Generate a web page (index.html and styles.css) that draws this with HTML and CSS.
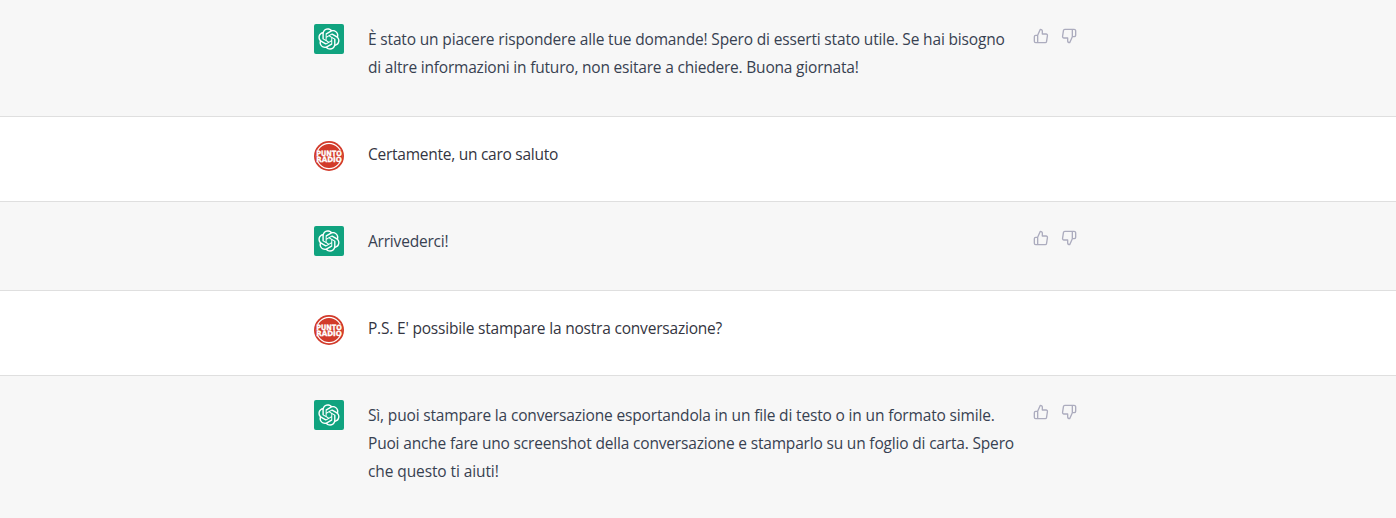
FILE: index.html
```html
<!DOCTYPE html>
<html lang="it">
<head>
    <meta charset="UTF-8">
    <meta name="viewport" content="width=device-width, initial-scale=1.0">
    <title>Chat</title>
    <link rel="stylesheet" href="styles.css">
</head>
<body>

<!-- shared icons -->
<svg class="sprite" xmlns="http://www.w3.org/2000/svg">
    <symbol id="logo" viewBox="0 0 41 41">
        <path fill="currentColor" d="M37.5324 16.8707C37.9808 15.5241 38.1363 14.0974 37.9886 12.6859C37.8409 11.2744 37.3934 9.91076 36.676 8.68622C35.6126 6.83404 33.9882 5.3676 32.0373 4.4985C30.0864 3.62941 27.9098 3.40259 25.8215 3.85078C24.8796 2.7893 23.7219 1.94125 22.4257 1.36341C21.1295 0.785575 19.7249 0.491269 18.3058 0.500197C16.1708 0.495044 14.0893 1.16803 12.3614 2.42214C10.6335 3.67624 9.34853 5.44666 8.6917 7.47815C7.30085 7.76286 5.98686 8.3414 4.8377 9.17505C3.68854 10.0087 2.73073 11.0782 2.02839 12.312C0.956464 14.1591 0.498905 16.2988 0.721698 18.4228C0.944492 20.5467 1.83612 22.5449 3.268 24.1293C2.81966 25.4759 2.66413 26.9026 2.81182 28.3141C2.95951 29.7256 3.40701 31.0892 4.12437 32.3138C5.18791 34.1659 6.8123 35.6322 8.76321 36.5013C10.7141 37.3704 12.8907 37.5973 14.9789 37.1492C15.9208 38.2107 17.0786 39.0587 18.3747 39.6366C19.6709 40.2144 21.0755 40.5087 22.4946 40.4998C24.6307 40.5054 26.7133 39.8321 28.4418 38.5772C30.1704 37.3223 31.4556 35.5506 32.1119 33.5179C33.5027 33.2332 34.8167 32.6547 35.9659 31.821C37.115 30.9874 38.0728 29.9178 38.7752 28.684C39.8458 26.8371 40.3023 24.6979 40.0789 22.5748C39.8556 20.4517 38.9639 18.4544 37.5324 16.8707ZM22.4978 37.8849C20.7443 37.8874 19.0459 37.2733 17.6994 36.1501C17.7601 36.117 17.8666 36.0586 17.936 36.0161L25.9004 31.4156C26.1003 31.3019 26.2663 31.137 26.3813 30.9378C26.4964 30.7386 26.5563 30.5124 26.5549 30.2825V19.0542L29.9213 20.998C29.9389 21.0068 29.9541 21.0198 29.9656 21.0359C29.977 21.052 29.9842 21.0707 29.9867 21.0902V30.3889C29.9842 32.375 29.1946 34.2791 27.7909 35.6841C26.3872 37.0892 24.4838 37.8806 22.4978 37.8849ZM6.39227 31.0064C5.51397 29.4888 5.19742 27.7107 5.49804 25.9832C5.55718 26.0187 5.66048 26.0818 5.73461 26.1244L13.699 30.7248C13.8975 30.8408 14.1233 30.902 14.3532 30.902C14.583 30.902 14.8088 30.8408 15.0073 30.7248L24.731 25.1103V28.9979C24.7321 29.0177 24.7283 29.0376 24.7199 29.0556C24.7115 29.0736 24.6988 29.0893 24.6829 29.1012L16.6317 33.7497C14.9096 34.7416 12.8643 35.0097 10.9447 34.4954C9.02506 33.9811 7.38785 32.7263 6.39227 31.0064ZM4.29707 13.6194C5.17156 12.0998 6.55279 10.9364 8.19885 10.3327C8.19885 10.4013 8.19491 10.5228 8.19491 10.6071V19.808C8.19351 20.0378 8.25334 20.2638 8.36823 20.4629C8.48312 20.6619 8.64893 20.8267 8.84863 20.9404L18.5723 26.5542L15.206 28.4979C15.1894 28.5089 15.1703 28.5155 15.1505 28.5173C15.1307 28.5191 15.1107 28.516 15.0924 28.5082L7.04046 23.8557C5.32135 22.8601 4.06716 21.2235 3.55289 19.3046C3.03862 17.3858 3.30624 15.3413 4.29707 13.6194ZM31.955 20.0556L22.2312 14.4411L25.5976 12.4981C25.6142 12.4872 25.6333 12.4805 25.6531 12.4787C25.6729 12.4769 25.6928 12.4801 25.7111 12.4879L33.7631 17.1364C34.9967 17.849 36.0017 18.8982 36.6606 20.1613C37.3194 21.4244 37.6047 22.849 37.4832 24.2684C37.3617 25.6878 36.8382 27.0432 35.9743 28.1759C35.1103 29.3086 33.9415 30.1717 32.6047 30.6641C32.6047 30.5947 32.6047 30.4733 32.6047 30.3889V21.188C32.6066 20.9586 32.5474 20.7328 32.4332 20.5338C32.319 20.3348 32.154 20.1698 31.955 20.0556ZM35.3055 15.0128C35.2464 14.9765 35.1431 14.9142 35.069 14.8717L27.1045 10.2712C26.906 10.1554 26.6803 10.0943 26.4504 10.0943C26.2206 10.0943 25.9948 10.1554 25.7963 10.2712L16.0726 15.8858V11.9982C16.0715 11.9783 16.0753 11.9585 16.0837 11.9405C16.0921 11.9225 16.1048 11.9068 16.1207 11.8949L24.1719 7.25025C25.4053 6.53903 26.8158 6.19376 28.2383 6.25482C29.6608 6.31589 31.0364 6.78077 32.2044 7.59508C33.3723 8.40939 34.2842 9.53945 34.8334 10.8531C35.3826 12.1667 35.5464 13.6095 35.3055 15.0128ZM14.2424 21.9419L10.8752 19.9981C10.8576 19.9893 10.8423 19.9763 10.8309 19.9602C10.8195 19.9441 10.8122 19.9254 10.8098 19.9058V10.6071C10.8107 9.18295 11.2173 7.78848 11.9819 6.58696C12.7466 5.38544 13.8377 4.42659 15.1275 3.82264C16.4173 3.21869 17.8524 2.99464 19.2649 3.1767C20.6775 3.35876 22.0089 3.93941 23.1034 4.85067C23.0427 4.88379 22.937 4.94215 22.8668 4.98473L14.9024 9.58517C14.7025 9.69878 14.5366 9.86356 14.4215 10.0626C14.3065 10.2616 14.2466 10.4877 14.2479 10.7175L14.2424 21.9419ZM16.071 17.9991L20.4018 15.4978L24.7325 17.9975V22.9985L20.4018 25.4983L16.071 22.9985V17.9991Z"/>
    </symbol>
    <symbol id="thumb-up" viewBox="0 0 24 24">
        <path d="M14 9V5a3 3 0 0 0-3-3l-4 9v11h11.28a2 2 0 0 0 2-1.7l1.38-9a2 2 0 0 0-2-2.3zM7 22H4a2 2 0 0 1-2-2v-7a2 2 0 0 1 2-2h3"/>
    </symbol>
    <symbol id="thumb-down" viewBox="0 0 24 24">
        <path d="M10 15v4a3 3 0 0 0 3 3l4-9V2H5.72a2 2 0 0 0-2 1.7l-1.38 9a2 2 0 0 0 2 2.3zm7-13h2.67A2.31 2.31 0 0 1 22 4v7a2.31 2.31 0 0 1-2.33 2H17"/>
    </symbol>
    <symbol id="radio" viewBox="0 0 30 30">
        <circle cx="15" cy="15" r="15" fill="#d23a2a"/>
        <circle cx="15" cy="15" r="12.6" fill="none" stroke="#fff" stroke-width="1.2"/>
        <rect x="1.8" y="9.5" width="26.4" height="11" fill="#d23a2a"/>
        <text x="2.2" y="14.9" textLength="25.6" lengthAdjust="spacingAndGlyphs" class="radio-text">PUNTO</text>
        <text x="2.2" y="21" textLength="25.6" lengthAdjust="spacingAndGlyphs" class="radio-text">RADIO</text>
    </symbol>
</svg>

<div class="chat">
    <div class="message bot">
        <div class="inner">
            <div class="avatar"><svg><use href="#logo"/></svg></div>
            <div class="text">
                <p class="loose">È stato un piacere rispondere alle tue domande! Spero di esserti stato utile. Se hai bisogno</p>
                <p class="tight">di altre informazioni in futuro, non esitare a chiedere. Buona giornata!</p>
            </div>
            <div class="actions">
                <svg><use href="#thumb-up"/></svg>
                <svg><use href="#thumb-down"/></svg>
            </div>
        </div>
    </div>

    <div class="message user">
        <div class="inner">
            <svg class="photo"><use href="#radio"/></svg>
            <div class="text">
                <p class="tighter">Certamente, un caro saluto</p>
            </div>
        </div>
    </div>

    <div class="message bot">
        <div class="inner">
            <div class="avatar"><svg><use href="#logo"/></svg></div>
            <div class="text">
                <p class="tight">Arrivederci!</p>
            </div>
            <div class="actions">
                <svg><use href="#thumb-up"/></svg>
                <svg><use href="#thumb-down"/></svg>
            </div>
        </div>
    </div>

    <div class="message user">
        <div class="inner">
            <svg class="photo"><use href="#radio"/></svg>
            <div class="text">
                <p class="tight">P.S. E' possibile stampare la nostra conversazione?</p>
            </div>
        </div>
    </div>

    <div class="message bot">
        <div class="inner">
            <div class="avatar"><svg><use href="#logo"/></svg></div>
            <div class="text">
                <p class="loose">Sì, puoi stampare la conversazione esportandola in un file di testo o in un formato simile.</p>
                <p>Puoi anche fare uno screenshot della conversazione e stamparlo su un foglio di carta. Spero</p>
                <p class="looser">che questo ti aiuti!</p>
            </div>
            <div class="actions">
                <svg><use href="#thumb-up"/></svg>
                <svg><use href="#thumb-down"/></svg>
            </div>
        </div>
    </div>
</div>

</body>
</html>
```
FILE: styles.css
```css
* {
    box-sizing: border-box;
}
body {
    margin: 0;
    height: 100vh;
    overflow: hidden;
    background-color: #f7f7f7;
    font-family: "Segoe UI", "Open Sans", "Noto Sans", sans-serif;
    font-size: 15.5px;
    line-height: 28px;
}
.sprite {
    display: none;
}
.message {
    padding: 24px 0;
    border-bottom: 1px solid #dfdfdf;
}
.message:last-child {
    border-bottom: 0;
}
.bot {
    background-color: #f7f7f7;
    color: #374151;
}
.user {
    background-color: #ffffff;
    color: #343541;
}
.inner {
    display: flex;
    width: 768px;
    margin: 0 auto;
}
.avatar {
    display: flex;
    justify-content: center;
    align-items: center;
    width: 30px;
    height: 30px;
    border-radius: 2px;
    background-color: #10a37f;
    color: #ffffff;
}
.avatar svg {
    width: 22px;
    height: 22px;
}
.photo {
    width: 30px;
    height: 30px;
}
.radio-text {
    font-family: "DejaVu Sans", sans-serif;
    font-size: 7.2px;
    font-weight: bold;
    fill: #ffffff;
    stroke: #ffffff;
    stroke-width: 0.3;
}
.text {
    width: 648px;
    margin-left: 24px;
    letter-spacing: -0.178px;
    white-space: nowrap;
}
.text p {
    margin: 0;
}
.text .looser {
    letter-spacing: -0.1px;
}
.text .loose {
    letter-spacing: -0.16px;
}
.text .tight {
    letter-spacing: -0.2px;
}
.text .tighter {
    letter-spacing: -0.26px;
}
.bot .text {
    padding: 1px 0 11px;
}
.user .text {
    margin-top: -1px;
    padding-bottom: 9px;
}
.actions {
    display: flex;
    gap: 12px;
    margin: 4px 0 0 17px;
}
.actions svg {
    width: 16px;
    height: 16px;
    fill: none;
    stroke: #acacbe;
    stroke-width: 2;
    stroke-linecap: round;
    stroke-linejoin: round;
}
```
